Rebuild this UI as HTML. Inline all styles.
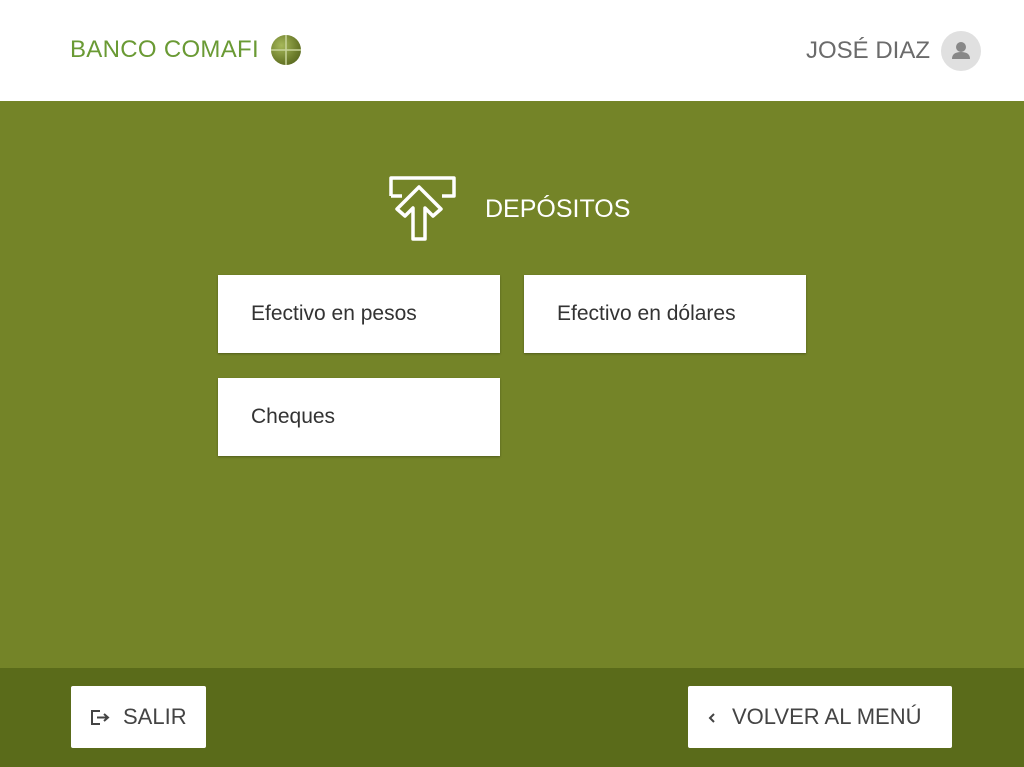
<!DOCTYPE html>
<html><head><meta charset="utf-8"><style>
body{margin:0;width:1024px;height:767px;position:relative;font-family:"Liberation Sans",sans-serif;background:#748428;overflow:hidden}
.hdr{position:absolute;left:0;top:0;width:1024px;height:101px;background:#fff}
.logo{position:absolute;left:70px;top:36px;font-size:24px;color:#6a9a34;letter-spacing:0.3px}
.globe{position:absolute;left:271px;top:35px;width:30px;height:30px;border-radius:50%;background:radial-gradient(circle at 35% 35%,#a6b85a,#6b7b2a 60%,#4a5a1a)}
.user{position:absolute;right:94px;top:37px;font-size:24px;color:#6b6b6b}
.av{position:absolute;left:941px;top:31px;width:40px;height:40px;border-radius:50%;background:#e0e0e0}
.btn{position:absolute;background:#fff;font-size:21px;color:#333;box-sizing:border-box;padding-left:33px;line-height:78px;box-shadow:0 1px 2px rgba(0,0,0,.3)}
.ftr{position:absolute;left:0;top:668px;width:1024px;height:99px;background:#5a6b1a}
.fb{position:absolute;background:#fff;border-radius:2px;font-size:22px;color:#444;line-height:62px;top:686px;height:62px}
</style></head><body>
<div class="hdr">
<div class="logo">BANCO COMAFI</div>
<div class="globe"><svg width="30" height="30"><line x1="15" y1="0" x2="15" y2="30" stroke="#c8d49a" stroke-width="1.5"/><line x1="0" y1="15" x2="30" y2="15" stroke="#c8d49a" stroke-width="1.5"/></svg></div>
<div class="user">JOSÉ DIAZ</div>
<div class="av"><svg width="40" height="40"><circle cx="20" cy="16" r="5" fill="#888"/><path d="M11 28 q0-7 9-7 q9 0 9 7z" fill="#888"/></svg></div>
</div>
<svg style="position:absolute;left:380px;top:170px" width="90" height="80" fill="none" stroke="#fff" stroke-width="3.5" stroke-linejoin="round">
<path d="M11 26 V8 H74 V26 H62"/><path d="M11 26 H22"/>
<path d="M39 17 L17 39 L25 46 L33 38 V69 H45 V38 L53 46 L61 39 Z"/>
</svg>
<div style="position:absolute;left:485px;top:195px;font-size:25px;color:#fff">DEPÓSITOS</div>
<div class="btn" style="left:218px;top:275px;width:282px;height:78px">Efectivo en pesos</div>
<div class="btn" style="left:524px;top:275px;width:282px;height:78px">Efectivo en dólares</div>
<div class="btn" style="left:218px;top:378px;width:282px;height:78px">Cheques</div>
<div class="ftr"></div>
<div class="fb" style="left:71px;width:135px"><svg style="position:absolute;left:20px;top:24px" width="20" height="15" fill="none" stroke="#444" stroke-width="2"><path d="M9 1H1V14H9"/><path d="M6 7.5H17M13 4l4 3.5-4 3.5"/></svg><span style="position:absolute;left:52px">SALIR</span></div>
<div class="fb" style="left:688px;width:264px"><svg style="position:absolute;left:19px;top:26px" width="10" height="12" fill="none" stroke="#444" stroke-width="2"><path d="M7 2L3 6L7 10"/></svg><span style="position:absolute;left:44px">VOLVER AL MENÚ</span></div>
</body></html>
